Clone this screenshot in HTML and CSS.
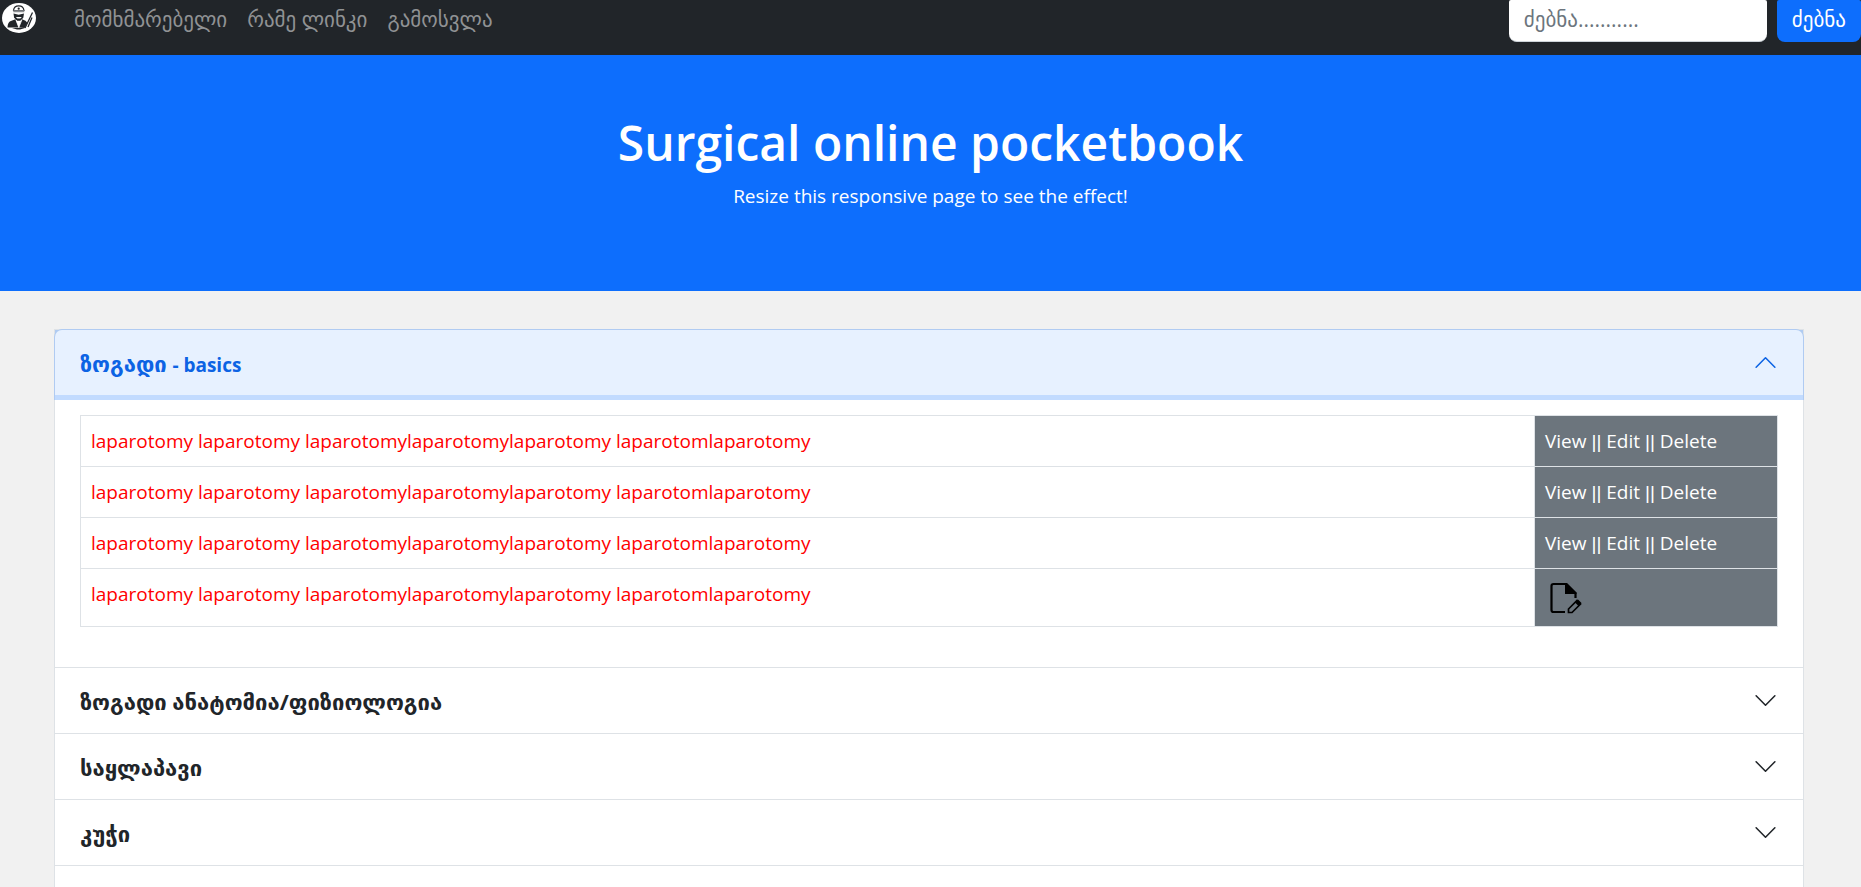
FILE: index.html
```html
<!DOCTYPE html>
<html lang="ka">
<head>
    <meta charset="UTF-8">
    <meta name="viewport" content="width=device-width, initial-scale=1">
    <title>Surgical online pocketbook</title>
    <link rel="stylesheet" href="styles.css">
</head>
<body>
<nav class="navbar">
    <a class="logo" href="#" aria-label="Surgical online pocketbook">
        <svg viewBox="0 0 34 30" width="34" height="30">
            <ellipse cx="17" cy="15" rx="17" ry="15" fill="#fff"/>
            <path d="M11.5 7.5Q12 2.8 16.7 2.8T22 7.5Z" fill="#fff" stroke="#212529" stroke-width="1.2"/>
            <circle cx="16.7" cy="5.7" r="1.1" fill="#212529"/>
            <path d="M11.3 7.2h11v2h-11z" fill="#8a8d90"/>
            <path d="M11.5 10.5l5.2 1.3 5.3-1.3-.7 4.3-3 3h-3.200l-3-3z" fill="#212529"/>
            <path d="M13.800 14h6l-1.500 1.500h-3z" fill="#fff"/>
            <path d="M5.500 24.500Q5.500 19 9.500 17.800l4-1.500 3.300 8.200z" fill="#212529"/>
            <path d="M20 16.300l3.500 1.500 2 2.200-3 5-5.700-.5z" fill="#212529"/>
            <path d="M14 17l2.800 7.500 3-7.500" fill="none" stroke="#fff" stroke-width=".8"/>
            <path d="M10 25h13l-5 1.500h-3z" fill="#212529"/>
            <path d="M30.500 9.500L23 25M30 14.500L26 24" fill="none" stroke="#212529" stroke-width="1.300"/>
        </svg>
    </a>
    <ul class="nav-links">
        <li><a href="#">მომხმარებელი</a></li>
        <li><a href="#">რამე ლინკი</a></li>
        <li><a href="#">გამოსვლა</a></li>
    </ul>
    <form class="search">
        <input class="search-input" type="text" placeholder="ძებნა..........." aria-label="ძებნა">
        <button class="search-btn" type="button">ძებნა</button>
    </form>
</nav>

<header class="hero">
    <h1>Surgical online pocketbook</h1>
    <p>Resize this responsive page to see the effect!</p>
</header>

<main class="accordion">
    <section class="item">
        <h2 class="open">
            <button class="item-btn active" type="button" aria-expanded="true" aria-controls="basics">
                <span>ზოგადი <span class="latin">- basics</span></span>
                <svg class="chevron" viewBox="0 0 16 16"><path d="M2 11l6-6 6 6"/></svg>
            </button>
        </h2>
        <div class="item-body" id="basics">
            <table class="table">
                <tr>
                    <td>laparotomy laparotomy laparotomylaparotomylaparotomy laparotomlaparotomy</td>
                    <td class="actions"><a href="#">View</a> <span class="sep">||</span> <a href="#">Edit</a> <span class="sep">||</span> <a href="#">Delete</a></td>
                </tr>
                <tr>
                    <td>laparotomy laparotomy laparotomylaparotomylaparotomy laparotomlaparotomy</td>
                    <td class="actions"><a href="#">View</a> <span class="sep">||</span> <a href="#">Edit</a> <span class="sep">||</span> <a href="#">Delete</a></td>
                </tr>
                <tr>
                    <td>laparotomy laparotomy laparotomylaparotomylaparotomy laparotomlaparotomy</td>
                    <td class="actions"><a href="#">View</a> <span class="sep">||</span> <a href="#">Edit</a> <span class="sep">||</span> <a href="#">Delete</a></td>
                </tr>
                <tr>
                    <td>laparotomy laparotomy laparotomylaparotomylaparotomy laparotomlaparotomy</td>
                    <td class="actions">
                        <a class="edit-icon" href="#" aria-label="Edit">
                            <svg viewBox="0 0 32 32" width="32" height="32">
                                <path d="M15 30H3.500Q1.500 30 1.500 28V4Q1.500 2 3.500 2H16l9.500 9.500V16" fill="none" stroke="#000" stroke-width="2.200"/>
                                <path d="M15 1h2l9.500 9.500V12H15z"/>
                                <path d="M18.500 27l8.500-8.500 3.500 3.500-8.500 8.500h-3.500z" fill="none" stroke="#000" stroke-width="1.700"/>
                                <path d="M25 20.500l3-3 3.500 3.500-3 3z"/>
                            </svg>
                        </a>
                    </td>
                </tr>
            </table>
        </div>
    </section>
    <section class="item">
        <h2>
            <button class="item-btn" type="button" aria-expanded="false">
                <span>ზოგადი ანატომია/ფიზიოლოგია</span>
                <svg class="chevron" viewBox="0 0 16 16"><path d="M2 5l6 6 6-6"/></svg>
            </button>
        </h2>
    </section>
    <section class="item">
        <h2>
            <button class="item-btn" type="button" aria-expanded="false">
                <span>საყლაპავი</span>
                <svg class="chevron" viewBox="0 0 16 16"><path d="M2 5l6 6 6-6"/></svg>
            </button>
        </h2>
    </section>
    <section class="item">
        <h2>
            <button class="item-btn" type="button" aria-expanded="false">
                <span>კუჭი</span>
                <svg class="chevron" viewBox="0 0 16 16"><path d="M2 5l6 6 6-6"/></svg>
            </button>
        </h2>
    </section>
</main>
</body>
</html>
```
FILE: styles.css
```css
* {
    box-sizing: border-box;
    padding: 0;
    margin: 0;
}

body {
    display: flex;
    flex-direction: column;
    min-height: 100vh;
    background: #f1f1f1;
    color: #212529;
    font-family: "Open Sans", "DejaVu Sans", sans-serif;
    font-size: 19px;
    line-height: 30px;
}

a {
    color: inherit;
    text-decoration: none;
}

.navbar {
    display: flex;
    align-items: flex-start;
    height: 55px;
    background: #212529;
}

.logo {
    padding: 3px 2px;
    line-height: 0;
}

.nav-links {
    display: flex;
    gap: 20px;
    padding: 4px 0 0 36px;
    list-style: none;
    color: #909294;
    font-size: 21px;
}

.search {
    display: flex;
    gap: 10px;
    margin-left: auto;
}

.search-input, .search-btn {
    height: 42px;
    padding: 0 15px 4px;
    border: 0;
    border-radius: 2px 2px 8px 8px;
    font-family: inherit;
    font-size: 21px;
}

.search-input {
    width: 258px;
    border-bottom: 1px solid #ced4da;
    background: #fff;
}

.search-input::placeholder {
    color: #6c757d;
}

.search-btn {
    background: #0d6efd;
    color: #fff;
}

.hero {
    padding: 58px 20px 80px;
    background: #0d6efd;
    color: #fff;
    text-align: center;
}

.hero h1 {
    margin-bottom: 8px;
    font-size: 48px;
    font-weight: 600;
    line-height: 60px;
}

.accordion {
    flex: 1;
    margin: 38px 57px 0 54px;
    border: 1px solid #dee2e6;
    border-bottom: 0;
    background: #fff;
}

.item {
    border-bottom: 1px solid #dee2e6;
}

.item .open {
    background: #b0cbf2;
}

.item-btn {
    display: flex;
    justify-content: space-between;
    align-items: center;
    width: 100%;
    height: 65px;
    padding: 0 25px;
    border: 0;
    background: #fff;
    color: #212529;
    font-family: inherit;
    font-size: 22px;
    font-weight: bold;
}

.item-btn.active {
    height: 70px;
    padding-bottom: 5px;
    border-radius: 7px 7px 0 0;
    background: #e7f1ff;
    color: #0c63e4;
    box-shadow: 0 -1px 0 #b0cbf2, -1px 0 0 #b0cbf2, 1px 0 0 #b0cbf2, inset 0 -5px 0 #c2dbff;
}

.latin {
    font-size: 19px;
}

.chevron {
    width: 25px;
    height: 25px;
    fill: none;
    stroke: currentColor;
    stroke-linecap: round;
    stroke-linejoin: round;
}

.item-body {
    padding: 15px 25px 40px;
}

.table {
    width: 100%;
    border-collapse: collapse;
}

.table td {
    height: 51px;
    padding: 10px;
    border: 1px solid #dee2e6;
    color: #f00;
    vertical-align: top;
}

.table .actions {
    width: 243px;
    background: #6c757d;
    color: #fff;
}

.sep {
    font-family: "Liberation Sans", sans-serif;
    line-height: 1;
}

.edit-icon {
    display: block;
    height: 37px;
    padding: 3px 5px;
}
```
